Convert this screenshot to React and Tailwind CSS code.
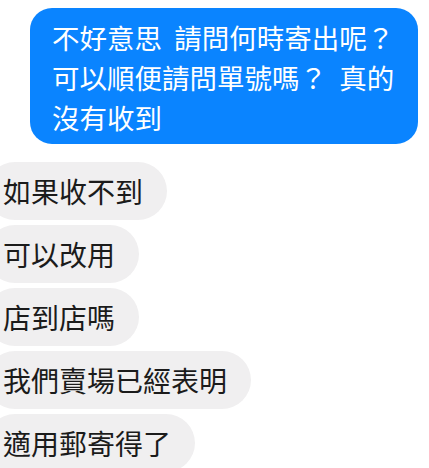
import React from 'react';

const font = { fontFamily: '"Noto Sans CJK TC", "Noto Sans CJK SC", sans-serif' };

const replies = ['如果收不到', '可以改用', '店到店嗎', '我們賣場已經表明', '適用郵寄得了'];

const Outgoing = ({ lines }) => (
  <div className="ml-[30px] mt-[7px] w-[388px] rounded-[22px] bg-[#0a84ff] pl-[22px] pr-[10px] pt-[9px] pb-[7px] text-[27.5px] leading-[40px] text-white [word-spacing:6px]">
    {lines.map((line, i) => (
      <div key={i} className="whitespace-pre">{line}</div>
    ))}
  </div>
);

const Incoming = ({ text }) => (
  <div className="h-[58px] flex items-center rounded-full bg-[#f0eff0] pl-[17px] pr-[24px] text-[28px] text-[#1b1b1b] whitespace-nowrap">
    {text}
  </div>
);

export default function App() {
  return (
    <div className="w-[429px] h-[468px] bg-white overflow-hidden" style={font}>
      <div className="pt-px">
        <Outgoing lines={['不好意思 請問何時寄出呢？', '可以順便請問單號嗎？ 真的', '沒有收到']} />
      </div>
      <div className="-ml-[14px] mt-[18px] flex flex-col items-start gap-[5px]">
        {replies.map(r => (
          <Incoming key={r} text={r} />
        ))}
      </div>
    </div>
  );
}
